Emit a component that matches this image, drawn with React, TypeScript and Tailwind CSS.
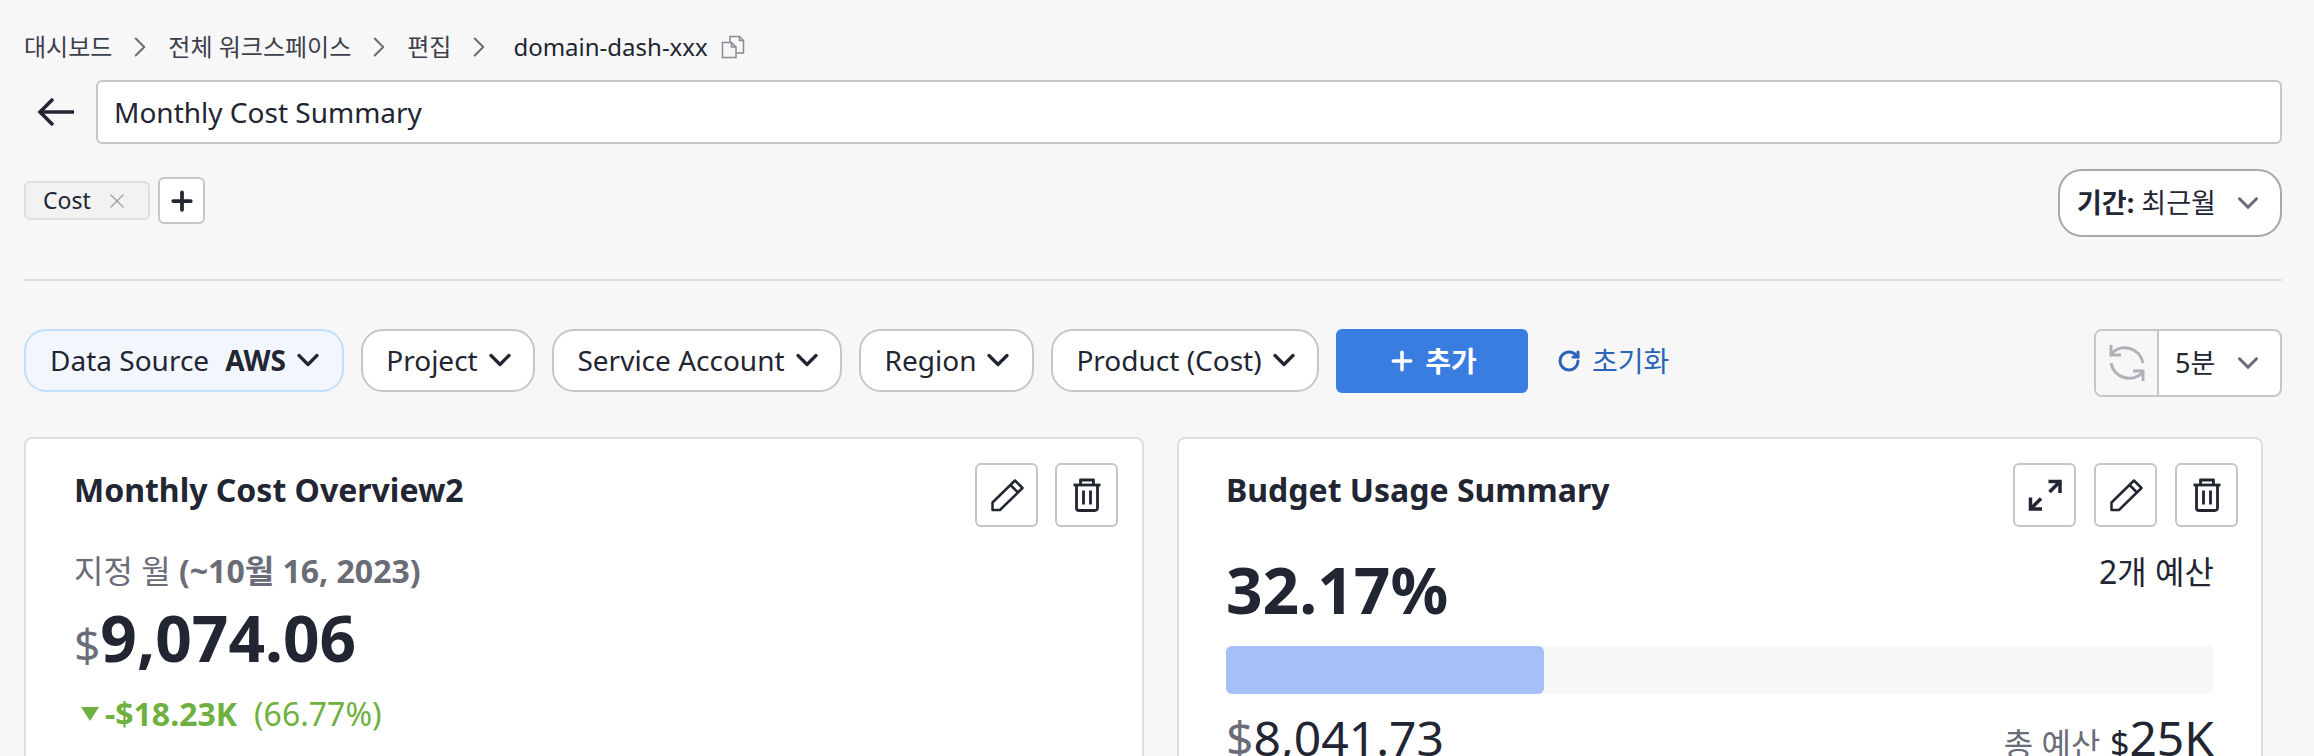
import { type ReactNode } from 'react';
import { ChevronDown, ChevronRight, Plus, RotateCw, X } from 'lucide-react';

const font = 'font-["Noto_Sans","Noto_Sans_CJK_KR",sans-serif]';

const CopyIcon = () => (
  <svg width="24" height="24" viewBox="0 0 24 24" fill="none" stroke="#8a8b94" strokeWidth="1.500">
    <path d="M1.500 7.500H10.500L15 12V22.500H1.500Z" />
    <path d="M10.500 7.500V12H15" />
    <path d="M9 7V1.500H18.500L22.500 5.500V18H15.500" />
    <path d="M18.500 1.500V5.500H22.500" />
  </svg>
);

const BackArrow = () => (
  <svg width="40" height="40" viewBox="0 0 40 40" fill="none" stroke="#222532" strokeWidth="3.500">
    <path d="M38 20H4" />
    <path d="M17 7L4 20 17 33" />
  </svg>
);

const PencilIcon = () => (
  <svg width="36" height="36" viewBox="0 0 36 36" fill="none" stroke="#222532" strokeWidth="2.500" strokeLinejoin="round">
    <path d="M26 3.500l7.500 7.500L11 33H3.500v-7.500z" />
    <path d="M21.500 8l8 8" />
  </svg>
);

const TrashIcon = () => (
  <svg width="36" height="36" viewBox="0 0 36 36" fill="none" stroke="#222532" strokeWidth="2.800" strokeLinejoin="round">
    <path d="M4.500 8h27" />
    <path d="M11.500 8V3h13v5" />
    <path d="M7.500 8v23a2.500 2.500 0 0 0 2.500 2.500h16a2.500 2.500 0 0 0 2.500-2.500V8" />
    <path d="M14.500 13.500v14M21.500 13.500v14" />
  </svg>
);

const ExpandIcon = () => (
  <svg width="36" height="36" viewBox="0 0 36 36" fill="none" stroke="#222532" strokeWidth="3.500">
    <path d="M21.500 4.500h11.500V16" />
    <path d="M33 4.500L22.500 15" />
    <path d="M3.500 20.500V32H15" />
    <path d="M3.500 32L14 21.500" />
  </svg>
);

const RefreshIcon = () => (
  <svg width="42" height="42" viewBox="0 0 42 42" fill="none" stroke="#b0b1b8" strokeWidth="3">
    <path d="M5 12a18.500 18.500 0 0 1 32 9" />
    <path d="M37 30a18.500 18.500 0 0 1-32-9" />
    <path d="M5 3v10h10" />
    <path d="M37 39V29H27" />
  </svg>
);

const IconButton = ({ children }: { children: ReactNode }) => (
  <button className="w-[63px] h-[64px] flex items-center justify-center bg-white border-2 border-[#c6c6c9] rounded-[6px]">
    {children}
  </button>
);

const FilterButton = ({ label, value, width }: { label: string; value?: string; width: string }) => (
  <button
    className={`${width} h-[63px] pb-[2px] flex items-center justify-center gap-[4px] rounded-[22px] border-2 text-[28px] text-[#222532] ${
      value ? 'bg-[#f3f7fd] border-[#bfe0fd]' : 'bg-white border-[#c6c6c9]'
    }`}
  >
    <span>
      {label}
      {value && <b className="ml-[16px] font-bold">{value}</b>}
    </span>
    <ChevronDown size={36} strokeWidth={2.200} className="-mr-[8px]" />
  </button>
);

const Breadcrumb = ({ children }: { children: ReactNode }) => (
  <>
    <span>{children}</span>
    <ChevronRight size={34} strokeWidth={1.400} className="text-[#6a6c78] ml-[11px] mr-[11px]" />
  </>
);

export default function App() {
  return (
    <div className={`${font} h-[756px] overflow-hidden bg-[#f7f7f7] pl-6 pr-8 text-[#222532]`}>
      <div className="pt-[28px] h-[66px] flex items-center text-[24px] text-[#3d404c]">
        <Breadcrumb>대시보드</Breadcrumb>
        <Breadcrumb>전체 워크스페이스</Breadcrumb>
        <Breadcrumb>편집</Breadcrumb>
        <span className="ml-[6px] text-[#222532]">domain-dash-xxx</span>
        <span className="ml-[13px]"><CopyIcon /></span>
      </div>

      <div className="mt-[14px] flex items-center gap-[18px]">
        <span className="pl-[12px] w-[54px]"><BackArrow /></span>
        <div className="flex-1 h-[64px] flex items-center px-[16px] bg-white border-2 border-[#c6c6c9] rounded-[6px] text-[28px]">
          Monthly Cost Summary
        </div>
      </div>

      <div className="mt-[25px] h-[68px] flex items-center">
        <div className="flex items-center mb-[5px]">
          <span className="w-[126px] h-[39px] flex items-center gap-[14px] pl-[17px] rounded-[6px] border-2 border-[#dedee0] bg-[#f2f2f3] text-[23px]">
            Cost <X size={24} strokeWidth={1.300} className="text-[#a0a1a8]" />
          </span>
          <button className="ml-[8px] w-[47px] h-[47px] flex items-center justify-center bg-white border-2 border-[#c6c6c9] rounded-[6px]">
            <Plus size={30} strokeWidth={3} />
          </button>
        </div>
        <button className="ml-auto w-[224px] h-[68px] flex items-center justify-between pl-[17px] pr-[15px] bg-white border-2 border-[#a8a9b0] rounded-[24px] text-[27px]">
          <span><b className="font-bold">기간:</b> 최근월</span>
          <ChevronDown size={34} strokeWidth={2.200} className="text-[#6a6c78]" />
        </button>
      </div>

      <div className="mt-[42px] h-[2px] bg-[#dedee0]" />

      <div className="mt-[48px] h-[68px] flex items-start gap-[17px]">
        <FilterButton label="Data Source" value="AWS" width="w-[320px]" />
        <FilterButton label="Project" width="w-[174px]" />
        <FilterButton label="Service Account" width="w-[290px]" />
        <FilterButton label="Region" width="w-[175px]" />
        <FilterButton label="Product (Cost)" width="w-[268px]" />
        <button className="w-[192px] h-[64px] flex items-center justify-center gap-[8px] rounded-[6px] bg-[#3a7de0] text-white text-[28px] font-bold">
          <Plus size={30} strokeWidth={2.800} /> 추가
        </button>
        <button className="ml-[12px] h-[64px] flex items-center gap-[11px] text-[#2a63b8] text-[28px]">
          <RotateCw size={24} strokeWidth={3} /> 초기화
        </button>
        <div className="ml-auto w-[188px] h-[68px] flex bg-white border-2 border-[#c6c6c9] rounded-[8px] overflow-hidden">
          <span className="w-[63px] flex items-center justify-center bg-[#f7f7f7] border-r-2 border-[#c6c6c9]">
            <RefreshIcon />
          </span>
          <span className="flex-1 flex items-center justify-between pl-[16px] pr-[15px] text-[27px]">
            5분 <ChevronDown size={34} strokeWidth={2.200} className="text-[#6a6c78]" />
          </span>
        </div>
      </div>

      <div className="mt-[40px] flex gap-[33px]">
        <section className="w-[1120px] h-[400px] shrink-0 bg-white border-2 border-[#dedee0] rounded-[8px] pt-[24px] pl-[48px] pr-[24px]">
          <div className="flex justify-between">
            <h2 className="pt-[4px] text-[32px] leading-[45px] font-bold">Monthly Cost Overview2</h2>
            <div className="flex gap-[17px]">
              <IconButton><PencilIcon /></IconButton>
              <IconButton><TrashIcon /></IconButton>
            </div>
          </div>
          <p className="mt-[22px] text-[32px] leading-[44px] text-[#6a6c78]">
            지정 월 <b className="font-bold">(~10월 16, 2023)</b>
          </p>
          <p className="flex items-baseline text-[64px] font-bold leading-[90px]">
            <span className="text-[46px] font-normal leading-none text-[#6a6c78]">$</span>9,074.06
          </p>
          <p className="mt-[9px] flex items-center text-[32px] leading-[44px] text-[#6fb141]">
            <span className="ml-[7px] mr-[6px] w-0 h-0 border-x-[9px] border-x-transparent border-t-[14px] border-t-[#6fb141]" />
            <b className="font-bold">-$18.23K</b>
            <span className="ml-[17px]">(66.77%)</span>
          </p>
        </section>

        <section className="w-[1086px] h-[400px] shrink-0 bg-white border-2 border-[#dedee0] rounded-[8px] pt-[24px] pl-[47px] pr-[23px]">
          <div className="flex justify-between">
            <h2 className="pt-[4px] text-[32px] leading-[45px] font-bold">Budget Usage Summary</h2>
            <div className="flex gap-[18px]">
              <IconButton><ExpandIcon /></IconButton>
              <IconButton><PencilIcon /></IconButton>
              <IconButton><TrashIcon /></IconButton>
            </div>
          </div>
          <div className="pr-[24px]">
            <div className="flex justify-between items-start">
              <span className="mt-[18px] text-[64px] font-bold leading-[90px]">32.17%</span>
              <span className="mt-[23px] text-[32px] leading-[44px]">2개 예산</span>
            </div>
            <div className="mt-[11px] h-[48px] rounded-[6px] bg-[#f7f7f7]">
              <div className="h-full rounded-[6px] bg-[#a6bff6]" style={{ width: '32.17%' }} />
            </div>
            <div className="mt-[8px] flex justify-between items-baseline text-[48px]">
              <span><span className="text-[#6a6c78]">$</span>8,041.73</span>
              <span><span className="mr-[-3px] text-[32px] text-[#6a6c78]">총 예산</span> <span className="text-[34px]">$</span>25K</span>
            </div>
          </div>
        </section>
      </div>
    </div>
  );
}
